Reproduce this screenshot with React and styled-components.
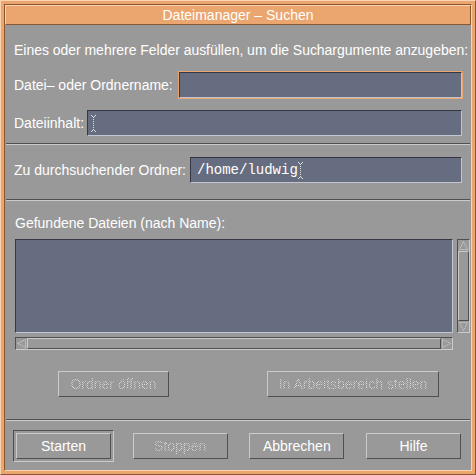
import React from 'react';
import styled, { createGlobalStyle } from 'styled-components';

const GlobalStyle = createGlobalStyle`
  html, body {
    margin: 0;
    padding: 0;
    background: #999999;
  }
  * {
    box-sizing: border-box;
  }
`;

// Motif palette
const ORANGE = '#eba66f';
const ORANGE_LIGHT = '#f9d4ae';
const ORANGE_DARK = '#8a5630';
const GRAY = '#999999';
const GRAY_LIGHT = '#cbcbcb';
const GRAY_DARK = '#505050';
const FIELD = '#676d80';

const stipple = `
  color: transparent;
  background: repeating-conic-gradient(#dadada 0 25%, transparent 0 50%) 0 0 / 2px 2px;
  -webkit-background-clip: text;
  background-clip: text;
`;

const Window = styled.div`
  width: 476px;
  height: 475px;
  display: flex;
  padding: 3px;
  background: ${ORANGE};
  border: 1px solid;
  border-color: ${ORANGE_LIGHT} ${ORANGE_DARK} ${ORANGE_DARK} ${ORANGE_LIGHT};
  font-family: "Liberation Sans", Arial, sans-serif;
`;

const Frame = styled.div`
  flex: 1;
  min-width: 0;
  display: flex;
  flex-direction: column;
  overflow: hidden;
  background: ${GRAY};
  border: 1px solid;
  border-color: ${ORANGE_DARK} ${ORANGE_LIGHT} ${ORANGE_LIGHT} ${ORANGE_DARK};
`;

const TitleBar = styled.div`
  height: 20px;
  flex: none;
  display: flex;
  align-items: center;
  justify-content: center;
  background: ${ORANGE};
  color: #ffffff;
  font-size: 14px;
  border: 1px solid;
  border-color: ${ORANGE_LIGHT} ${ORANGE_DARK} ${ORANGE_DARK} ${ORANGE_LIGHT};
`;

const Section = styled.div`
  display: flex;
  flex-direction: column;
  flex: none;
  padding: ${p => p.$pad};
`;

const Text = styled.div`
  color: #ffffff;
  font-size: 14px;
  line-height: 16px;
  white-space: nowrap;
  letter-spacing: ${p => p.$ls || '0'};
`;

const Row = styled.div`
  display: flex;
  align-items: center;
  margin-top: ${p => p.$mt || '0'};
`;

const Label = styled.span`
  width: ${p => p.$w};
  flex: none;
  color: #ffffff;
  font-size: 14px;
  white-space: nowrap;
`;

const FieldRing = styled.div`
  flex: 1;
  height: 28px;
  padding: 1px;
  background: ${p => (p.$focus ? ORANGE : 'transparent')};
  display: flex;
`;

const Field = styled.div`
  flex: 1;
  display: flex;
  align-items: center;
  padding-left: ${p => p.$pl || '6px'};
  background: ${FIELD};
  border: 1px solid;
  border-color: #343845 #c2c6d2 #c2c6d2 #343845;
  color: #ffffff;
  font-family: "Liberation Mono", "Courier New", monospace;
  font-size: 14px;
`;

const Separator = styled.div`
  height: 2px;
  flex: none;
  margin: 0 1px;
  border-top: 1px solid ${GRAY_DARK};
  border-bottom: 1px solid ${GRAY_LIGHT};
`;

const ListArea = styled.div`
  display: grid;
  grid-template-columns: 438px 13px;
  grid-template-rows: 94px 13px;
  column-gap: 4px;
  row-gap: 4px;
  margin-top: 8px;
`;

const ListBox = styled.div`
  background: ${FIELD};
  border: 1px solid;
  border-color: #343845 #c2c6d2 #c2c6d2 #343845;
`;

const ScrollTrack = styled.div`
  display: flex;
  flex-direction: ${p => (p.$vertical ? 'column' : 'row')};
  background: ${GRAY};
  border: 1px solid;
  border-color: ${GRAY_DARK} ${GRAY_LIGHT} ${GRAY_LIGHT} ${GRAY_DARK};
`;

const ArrowBox = styled.div`
  width: 11px;
  height: 11px;
  flex: none;
  display: flex;
`;

const Thumb = styled.div`
  flex: 1;
  border: 1px solid;
  border-color: ${GRAY_LIGHT} ${GRAY_DARK} ${GRAY_DARK} ${GRAY_LIGHT};
`;

const ActionRow = styled.div`
  display: flex;
  margin-top: 21px;
  padding-left: 43px;
  gap: 98px;
`;

const Button = styled.div`
  width: ${p => p.$w || '95px'};
  height: 26px;
  display: flex;
  align-items: center;
  justify-content: center;
  font-size: 14px;
  white-space: nowrap;
  color: #ffffff;
  border: 1px solid;
  border-color: ${GRAY_LIGHT} ${GRAY_DARK} ${GRAY_DARK} ${GRAY_LIGHT};
  ${p => p.$disabled && stipple}
`;

const ButtonBar = styled.div`
  display: flex;
  flex: none;
  justify-content: space-between;
  padding: 9px 7px 0 8px;
`;

const DefaultRing = styled.div`
  width: 101px;
  height: 32px;
  padding: 2px;
  border: 1px solid;
  border-color: ${p => (p.$active ? `${GRAY_DARK} ${GRAY_LIGHT} ${GRAY_LIGHT} ${GRAY_DARK}` : 'transparent')};
`;

const Caret = () => (
  <svg width="5" height="17" viewBox="0 0 5 17" style={{ flex: 'none' }}>
    <g fill="#e0e0e0">
      <rect x="0" y="0" width="1" height="1" />
      <rect x="4" y="0" width="1" height="1" />
      <rect x="1" y="1" width="1" height="1" />
      <rect x="3" y="1" width="1" height="1" />
      {Array.from({ length: 7 }).map((_, i) => (
        <rect key={i} x="2" y={2 + i * 2} width="1" height="1" />
      ))}
      <rect x="1" y="15" width="1" height="1" />
      <rect x="3" y="15" width="1" height="1" />
      <rect x="0" y="16" width="1" height="1" />
      <rect x="4" y="16" width="1" height="1" />
    </g>
  </svg>
);

const Arrow = ({ dir }) => {
  const pts = {
    up: '5.5,1.5 1.5,9.5 9.5,9.5',
    down: '1.5,1.5 9.5,1.5 5.5,9.5',
    left: '1.5,5.5 9.5,1.5 9.5,9.5',
    right: '1.5,1.5 9.5,5.5 1.5,9.5',
  }[dir];
  return (
    <ArrowBox>
      <svg width="11" height="11" viewBox="0 0 11 11">
        <polygon points={pts} fill="none" stroke="#d8d8d8" strokeWidth="1" strokeDasharray="1 1" />
      </svg>
    </ArrowBox>
  );
};

export default function App() {
  return (
    <>
      <GlobalStyle />
      <Window>
        <Frame>
          <TitleBar>Dateimanager – Suchen</TitleBar>

          <Section $pad="17px 8px 6px 9px">
            <Text $ls="-0.03px">Eines oder mehrere Felder ausfüllen, um die Suchargumente anzugeben:</Text>
            <Row $mt="13px">
              <Label $w="164px">Datei– oder Ordnername:</Label>
              <FieldRing $focus>
                <Field />
              </FieldRing>
            </Row>
            <Row $mt="10px">
              <Label $w="72px">Dateiinhalt:</Label>
              <FieldRing>
                <Field $pl="3px">
                  <Caret />
                </Field>
              </FieldRing>
            </Row>
          </Section>

          <Separator />

          <Section $pad="11px 8px 15px 9px">
            <Row>
              <Label $w="175px">Zu durchsuchender Ordner:</Label>
              <FieldRing>
                <Field>
                  /home/ludwig
                  <Caret />
                </Field>
              </FieldRing>
            </Row>
          </Section>

          <Separator />

          <Section $pad="14px 0 22px 10px">
            <Text>Gefundene Dateien (nach Name):</Text>
            <ListArea>
              <ListBox />
              <ScrollTrack $vertical>
                <Arrow dir="up" />
                <Thumb />
                <Arrow dir="down" />
              </ScrollTrack>
              <ScrollTrack>
                <Arrow dir="left" />
                <Thumb />
                <Arrow dir="right" />
              </ScrollTrack>
            </ListArea>
            <ActionRow>
              <Button $w="111px" $disabled>Ordner öffnen</Button>
              <Button $w="172px" $disabled>In Arbeitsbereich stellen</Button>
            </ActionRow>
          </Section>

          <Separator />

          <ButtonBar>
            <DefaultRing $active>
              <Button>Starten</Button>
            </DefaultRing>
            <DefaultRing>
              <Button $disabled>Stoppen</Button>
            </DefaultRing>
            <DefaultRing>
              <Button>Abbrechen</Button>
            </DefaultRing>
            <DefaultRing>
              <Button>Hilfe</Button>
            </DefaultRing>
          </ButtonBar>
        </Frame>
      </Window>
    </>
  );
}
